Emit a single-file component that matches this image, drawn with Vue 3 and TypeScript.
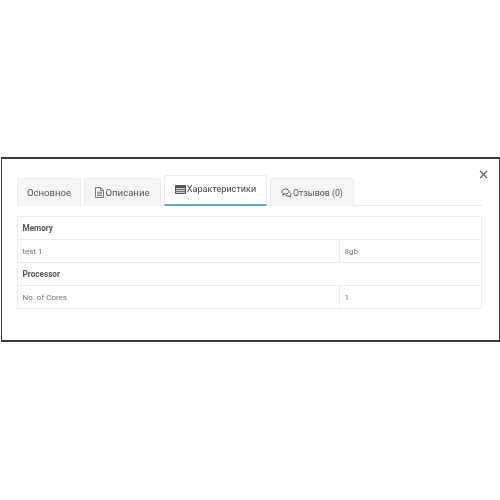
<script setup lang="ts">
interface Row {
  name: string
  value?: string
}

const rows: Row[] = [
  { name: 'Memory' },
  { name: 'test 1', value: '8gb' },
  { name: 'Processor' },
  { name: 'No. of Cores', value: '1' },
]
</script>

<template>
  <div class="page">
    <section class="modal">
      <button class="close" aria-label="Закрыть">
        <svg width="9" height="9" viewBox="0 0 9 9"><path d="M1 1l7 7M8 1L1 8" stroke="#666" stroke-width="1.2" fill="none" /></svg>
      </button>
      <nav class="tabs">
        <a class="tab first">Основное</a>
        <a class="tab second">
          <svg width="9" height="11" viewBox="0 0 9 11"><path d="M.5.5h5.200l2.800 2.800v7.200H.5zM5.500.5v3h3M2 5.200h5M2 6.900h5M2 8.600h5" stroke="#777" fill="none" stroke-width="1" /></svg>
          Описание
        </a>
        <a class="tab active">
          <svg width="11" height="9" viewBox="0 0 11 9"><rect width="11" height="9" rx="1" fill="#555" /><path d="M1 3h9v1.200H1zM1 5h9v1.200H1zM1 7h9v1H1z" fill="#ccc" /></svg>
          Характеристики
        </a>
        <a class="tab fourth">
          <svg width="11" height="10" viewBox="0 0 11 10"><path d="M4.500 1C2.500 1 1 2.100 1 3.500c0 .8.500 1.500 1.200 2l-.5 1.300 1.700-.9c.4.100.7.100 1.100.1 2 0 3.500-1.100 3.500-2.500S6.500 1 4.500 1z" stroke="#555" fill="none" /><path d="M8.800 4.500c.8.400 1.200 1 1.200 1.700 0 .6-.3 1.100-.9 1.500l.4 1.100-1.400-.7c-1.200.2-2.400-.1-3.100-.8" stroke="#555" fill="none" /></svg>
          Отзывов (0)
        </a>
      </nav>
      <table class="specs">
        <colgroup>
          <col class="name-col" />
          <col />
        </colgroup>
        <tbody>
          <tr v-for="row in rows" :key="row.name" :class="{ head: !row.value }">
            <td :colspan="row.value ? 1 : 2">{{ row.name }}</td>
            <td v-if="row.value">{{ row.value }}</td>
          </tr>
        </tbody>
      </table>
    </section>
  </div>
</template>

<style scoped>
.page {
  padding-top: 157px;
  font-family: Roboto, "Liberation Sans", sans-serif;
}

.modal {
  position: relative;
  box-sizing: border-box;
  height: 185px;
  margin: 0 0 0 1px;
  padding: 16px 16px 0 15px;
  background: #fff;
  border: 1px solid #3a3a3a;
  border-width: 2px 1px 2px 1px;
  filter: blur(0.4px);
}

.close {
  position: absolute;
  top: 11px;
  right: 11px;
  padding: 0;
  border: 0;
  background: none;
  line-height: 0;
}

.tabs {
  display: flex;
  align-items: flex-end;
  gap: 3px;
  height: 30px;
  border-bottom: 1px solid #ececec;
}

.tab {
  box-sizing: border-box;
  display: flex;
  align-items: center;
  justify-content: center;
  gap: 1px;
  height: 28px;
  margin-bottom: -1px;
  background: #f5f5f5;
  border: 1px solid #ececec;
  border-bottom: 0;
  border-radius: 2px 2px 0 0;
  color: #555;
  font-size: 9.600px;
}

.first { width: 64px; }
.second { width: 77px; }

.fourth {
  width: 84px;
  font-size: 8.800px;
}

.active {
  width: 103px;
  height: 31px;
  padding-bottom: 2px;
  background: #fff;
  border-bottom: 2px solid #64a6dc;
  color: #444;
  font-size: 9.100px;
}

.specs {
  width: 465px;
  margin-top: 10px;
  border-collapse: collapse;
  table-layout: fixed;
  font-size: 8px;
  color: #777;
}

.specs td {
  box-sizing: border-box;
  height: 23px;
  padding: 0 4.500px;
  border: 1px solid #ececec;
}

.head td {
  color: #555;
  font-weight: 700;
  font-size: 8.200px;
}

.name-col {
  width: 322px;
}
</style>
